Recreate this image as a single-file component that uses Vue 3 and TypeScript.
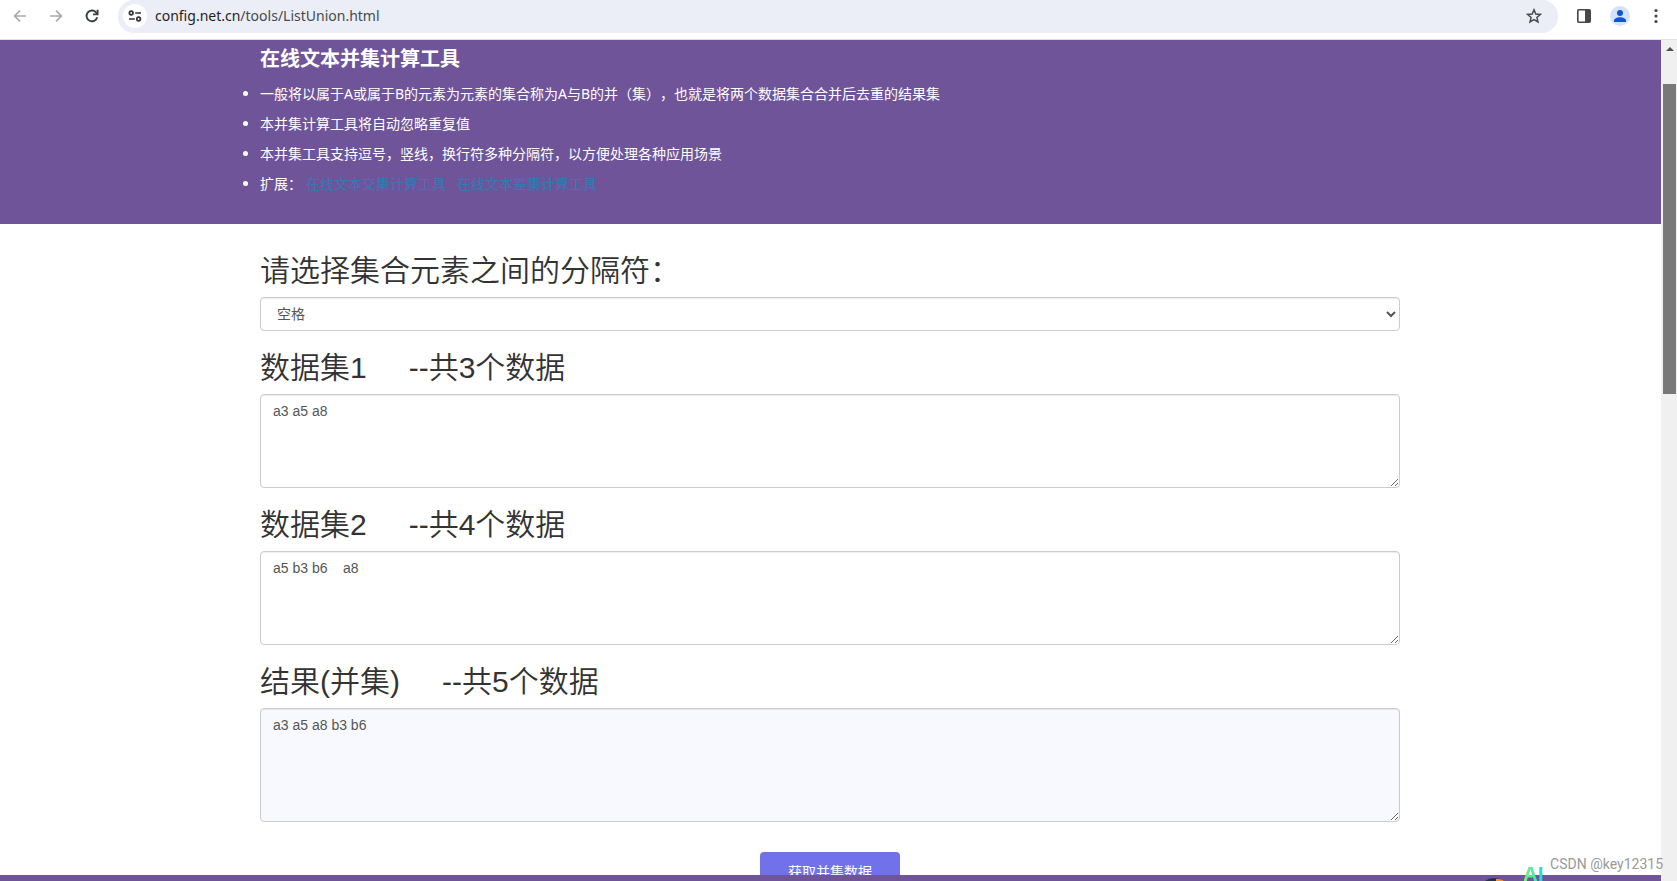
<script setup lang="ts">
import { computed, ref } from 'vue'

const separator = ref(' ')
const first = ref('a3 a5 a8')
const second = ref('a5 b3 b6    a8')
const result = ref('a3 a5 a8 b3 b6')

const split = (text: string): string[] =>
  text.split(separator.value).map((s) => s.trim()).filter((s) => s !== '')

const firstCount = computed(() => split(first.value).length)
const secondCount = computed(() => split(second.value).length)
const resultCount = computed(() => split(result.value).length)

function unite(): void {
  result.value = [...new Set([...split(first.value), ...split(second.value)])].join(separator.value)
}
</script>

<template>
  <div class="window">
    <header class="toolbar">
      <button class="tool" type="button" aria-label="后退">
        <svg width="16" height="16" viewBox="0 0 16 16" fill="none" stroke="#a9abad" stroke-width="1.7"><path d="M14 8H3M8 2.6 2.6 8 8 13.4" /></svg>
      </button>
      <button class="tool" type="button" aria-label="前进">
        <svg width="16" height="16" viewBox="0 0 16 16" fill="none" stroke="#a9abad" stroke-width="1.7"><path d="M2 8h11M8 2.6 13.4 8 8 13.4" /></svg>
      </button>
      <button class="tool" type="button" aria-label="重新加载">
        <svg width="16" height="16" viewBox="0 0 16 16" fill="none" stroke="#3c4043" stroke-width="1.9"><path d="M13.2 9.2A5.4 5.4 0 1 1 12 4.3l1.4 1.5" /><path d="M13.6 1.8v4.6H9" /></svg>
      </button>
      <div class="address">
        <button class="site" type="button" aria-label="网站信息">
          <svg width="14" height="12" viewBox="0 0 14 12" fill="none" stroke="#303336" stroke-width="1.7"><circle cx="3.2" cy="3" r="1.8" /><path d="M7.2 3H13M1 9h5.8" /><circle cx="10.6" cy="9" r="1.8" /></svg>
        </button>
        <div class="url"><span class="host">config.net.cn</span>/tools/ListUnion.html</div>
        <button class="star" type="button" aria-label="收藏">
          <svg width="16" height="16" viewBox="0 0 16 16" fill="none" stroke="#474a4d" stroke-width="1.5"><path d="m8 1.8 1.8 4.2 4.6.4-3.5 3 1.1 4.5L8 11.5l-4 2.4 1.1-4.5-3.5-3L6.2 6z" /></svg>
        </button>
      </div>
      <div class="actions">
        <button class="action" type="button" aria-label="侧边栏">
          <svg width="16" height="16" viewBox="0 0 16 16"><rect x="1.8" y="1.8" width="12.4" height="12.4" rx="1" fill="none" stroke="#474747" stroke-width="1.6" /><path d="M9 2h5v12H9z" fill="#474747" /></svg>
        </button>
        <button class="action" type="button" aria-label="用户">
          <svg width="20" height="20" viewBox="0 0 20 20"><circle cx="10" cy="10" r="10" fill="#d3e3fd" /><circle cx="10" cy="7" r="3" fill="#0b57d0" /><path d="M4 16v-1.5c0-2 3-3.3 6-3.3s6 1.3 6 3.3V16z" fill="#0b57d0" /></svg>
        </button>
        <button class="action" type="button" aria-label="更多">
          <svg width="16" height="16" viewBox="0 0 16 16" fill="#474747"><circle cx="8" cy="2.5" r="1.6" /><circle cx="8" cy="8" r="1.6" /><circle cx="8" cy="13.5" r="1.6" /></svg>
        </button>
      </div>
    </header>

    <div class="viewport">
      <div class="page">
        <section class="banner">
          <div class="container">
            <h1>在线文本并集计算工具</h1>
            <ul>
              <li>一般将以属于A或属于B的元素为元素的集合称为A与B的并（集），也就是将两个数据集合合并后去重的结果集</li>
              <li>本并集计算工具将自动忽略重复值</li>
              <li>本并集工具支持逗号，竖线，换行符多种分隔符，以方便处理各种应用场景</li>
              <li>扩展：<a href="#intersection">在线文本交集计算工具</a><a class="next" href="#difference">在线文本差集计算工具</a></li>
            </ul>
          </div>
        </section>

        <main class="container form">
          <label class="heading" for="separator">请选择集合元素之间的分隔符：</label>
          <select id="separator" v-model="separator" class="control">
            <option value=" ">空格</option>
            <option value=",">逗号</option>
            <option value="|">竖线</option>
            <option value="&#10;">换行符</option>
          </select>
          <label class="heading" for="first">数据集1<span class="count">--共{{ firstCount }}个数据</span></label>
          <textarea id="first" v-model="first" class="control area" spellcheck="false"></textarea>
          <label class="heading" for="second">数据集2<span class="count">--共{{ secondCount }}个数据</span></label>
          <textarea id="second" v-model="second" class="control area" spellcheck="false"></textarea>
          <label class="heading" for="result">结果(并集)<span class="count">--共{{ resultCount }}个数据</span></label>
          <textarea id="result" v-model="result" class="control area result" readonly></textarea>
          <button class="submit" type="button" @click="unite">获取并集数据</button>
        </main>
        <footer class="footer"></footer>
        <div class="assistant">
          <svg width="30" height="3" viewBox="0 0 30 3"><circle cx="15" cy="15" r="15" fill="#263445" /><path d="M17 1c5 0 7 1 9 3h-9z" fill="#f7931e" /></svg>
          <span class="ai">AI</span>
        </div>
      </div>
      <div class="scrollbar">
        <svg width="8" height="4" viewBox="0 0 8 4" fill="#505050"><path d="M0 4 4 0l4 4z" /></svg>
        <div class="thumb"></div>
      </div>
      <div class="watermark">CSDN @key12315</div>
    </div>
  </div>
</template>

<style>
body {
  margin: 0;
  overflow: hidden;
}
</style>

<style scoped>
* {
  box-sizing: border-box;
}
.window {
  height: 100vh;
  display: flex;
  flex-direction: column;
  overflow: hidden;
  background: #fff;
  color: #333;
  font: 14px/20px "Liberation Sans", "Noto Sans CJK SC", sans-serif;
  text-spacing-trim: space-all;
}
button {
  border: 0;
  padding: 0;
  background: none;
  font: inherit;
}
svg {
  display: block;
}
.toolbar {
  flex: none;
  height: 40px;
  display: flex;
  align-items: flex-start;
  padding-left: 2px;
  border-bottom: 1px solid #dfe1e5;
}
.tool {
  width: 36px;
  height: 32px;
  display: grid;
  place-items: center;
}
.address {
  flex: 1;
  height: 33px;
  margin-left: 8px;
  padding: 0 16px 1px 5px;
  display: flex;
  align-items: center;
  background: #ebeef7;
  border-radius: 16px;
}
.site {
  width: 24px;
  height: 24px;
  border-radius: 50%;
  background: #fff;
  display: grid;
  place-items: center;
}
.url {
  flex: 1;
  padding-left: 8px;
  color: #474a4d;
  font-family: "Noto Sans", sans-serif;
}
.host {
  color: #1f1f1f;
}
.actions {
  display: flex;
  align-items: center;
  gap: 18px;
  height: 32px;
  padding: 0 13px 0 18px;
}
.viewport {
  flex: 1;
  min-height: 0;
  display: flex;
  position: relative;
}
.page {
  flex: 1;
  position: relative;
  overflow: hidden;
}
.container {
  width: 100%;
  max-width: 1171px;
  margin: 0 auto;
  padding: 0 16px 0 15px;
}
.banner {
  padding: 7px 0 25px;
  background: #6f5499;
  color: #fff;
  font-family: "Noto Sans", "Noto Sans CJK SC", sans-serif;
}
h1 {
  margin: 0 0 10px;
  font-family: "Noto Sans CJK SC", sans-serif;
  font-size: 20px;
  line-height: 22px;
  font-weight: 700;
}
ul {
  margin: 0;
  padding: 0;
}
li {
  line-height: 30px;
}
a {
  margin-left: 4px;
  color: #337ab7;
  text-decoration: none;
}
.next {
  margin-left: 11px;
}
.form {
  display: flex;
  flex-direction: column;
  padding-top: 10px;
}
.heading {
  margin: 20px 0 10px;
  font-size: 30px;
  line-height: 33px;
  font-weight: 350;
}
.count {
  margin-left: 42px;
}
.control {
  display: block;
  width: 100%;
  height: 34px;
  padding: 6px 12px;
  border: 1px solid #ccc;
  border-radius: 4px;
  background-color: #fff;
  box-shadow: inset 0 1px 1px rgba(0, 0, 0, 0.075);
  color: #555;
  font: 14px/20px "Liberation Sans", "Noto Sans CJK SC", sans-serif;
}
.area {
  height: 94px;
}
.result {
  height: 114px;
  background-color: #f8f9ff;
}
.submit {
  flex: none;
  align-self: center;
  width: 140px;
  height: 40px;
  margin-top: 30px;
  border-radius: 4px;
  background: #7171e9;
  color: #fff;
}
.footer {
  position: absolute;
  left: 0;
  right: 0;
  bottom: 0;
  height: 6px;
  background: #6f5499;
}
.assistant {
  position: absolute;
  right: 117px;
  bottom: 0;
  display: flex;
  align-items: flex-end;
  gap: 15px;
}
.ai {
  display: block;
  font: 700 20px/14px "Open Sans", sans-serif;
  padding-top: 4px;
  background: linear-gradient(90deg, #7fee6c, #3fe9a9 55%, #12d3ff);
  background-clip: text;
  -webkit-background-clip: text;
  color: transparent;
}
.scrollbar {
  flex: none;
  width: 16px;
  padding: 7px 1px 0 2px;
  background: #f0f0f0;
}
.scrollbar svg {
  margin: 0 auto;
}
.thumb {
  height: 310px;
  margin-top: 33px;
  background: #787878;
}
.watermark {
  position: absolute;
  right: 14px;
  bottom: 7px;
  color: #999;
  font: 14px/20px Roboto, sans-serif;
}
</style>
